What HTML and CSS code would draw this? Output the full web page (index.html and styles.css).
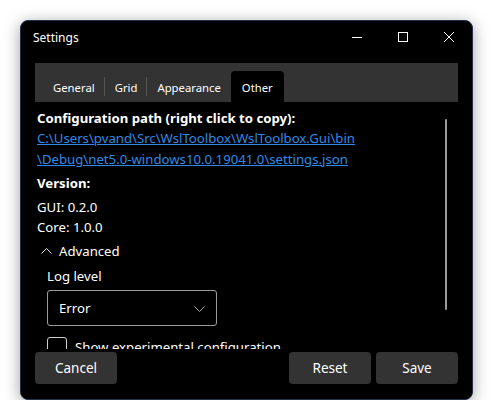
FILE: index.html
```html
<!DOCTYPE html>
<html>
<head>
<meta charset="utf-8">
<link rel="stylesheet" href="styles.css">
</head>
<body>
<div class="window">
  <div class="titlebar">
    <div class="title">Settings</div>
    <div class="caption-buttons">
      <div class="cap-btn"><svg width="10" height="10" viewBox="0 0 10 10"><path d="M0 5.5H10" stroke="#fff" stroke-width="1"/></svg></div>
      <div class="cap-btn"><svg width="10" height="10" viewBox="0 0 10 10"><rect x="0.5" y="0.5" width="9" height="9" fill="none" stroke="#fff" stroke-width="1"/></svg></div>
      <div class="cap-btn"><svg width="10" height="10" viewBox="0 0 10 10"><path d="M0 0L10 10M10 0L0 10" stroke="#fff" stroke-width="1"/></svg></div>
    </div>
  </div>
  <div class="tabstrip">
    <div class="tab sep">General</div>
    <div class="tab sep">Grid</div>
    <div class="tab">Appearance</div>
    <div class="tab active">Other</div>
  </div>
  <div class="scroller">
    <div class="content">
      <div class="heading">Configuration path (right click to copy):</div>
      <a class="link">C:\Users\pvand\Src\WslToolbox\WslToolbox.Gui\bin<br>\Debug\net5.0-windows10.0.19041.0\settings.json</a>
      <div class="heading version">Version:</div>
      <div class="line gui">GUI: 0.2.0</div>
      <div class="line">Core: 1.0.0</div>
      <div class="expander">
        <svg width="11" height="6" viewBox="0 0 11 6"><path d="M0.5 5.5L5.5 0.5L10.5 5.5" fill="none" stroke="#ddd" stroke-width="1"/></svg>
        <span>Advanced</span>
      </div>
      <div class="sub">
        <div class="label">Log level</div>
        <div class="combo">
          <span>Error</span>
          <svg width="11" height="6" viewBox="0 0 11 6"><path d="M0.5 0.5L5.5 5.5L10.5 0.5" fill="none" stroke="#aaa" stroke-width="1"/></svg>
        </div>
        <div class="check">
          <div class="box"></div>
          <span>Show experimental configuration</span>
        </div>
      </div>
    </div>
    <div class="scrollbar"></div>
  </div>
  <div class="footer">
    <div class="btn">Cancel</div>
    <div class="spacer"></div>
    <div class="btn">Reset</div>
    <div class="btn">Save</div>
  </div>
</div>
</body>
</html>
```

FILE: styles.css
```css
html, body {
  margin: 0;
  padding: 0;
  background: #fff;
}
body {
  font-family: "Noto Sans", "Open Sans", sans-serif;
  font-size: 13.2px;
  color: #fff;
}
.window {
  box-sizing: border-box;
  margin: 20px 0 0 20px;
  width: 453px;
  height: 380px;
  background: #000;
  border: 1px solid #22324a;
  border-radius: 8px;
  box-shadow: 0 3px 16px rgba(0, 0, 0, 0.38);
  display: flex;
  flex-direction: column;
  overflow: hidden;
}
.titlebar {
  height: 32px;
  display: flex;
  align-items: center;
  flex: none;
}
.title {
  padding-left: 12px;
  font-size: 12px;
  flex: 1;
  padding-top: 1px;
}
.caption-buttons {
  display: flex;
  height: 32px;
}
.cap-btn {
  width: 46px;
  height: 32px;
  display: flex;
  align-items: center;
  justify-content: center;
}
.tabstrip {
  flex: none;
  margin: 10px 14px 0 14px;
  height: 39px;
  background: #333333;
  display: flex;
  align-items: flex-end;
  padding-left: 8px;
}
.tab {
  height: 31px;
  line-height: 31px;
  padding: 0 10px;
  font-size: 11.3px;
  position: relative;
  box-sizing: border-box;
  padding-top: 1px;
}
.tab.sep::after {
  content: "";
  position: absolute;
  right: 0;
  top: 6px;
  height: 19px;
  width: 1px;
  background: #555;
}
.tab.active {
  background: #000;
  border-radius: 4px 4px 0 0;
  padding: 1px 11px 0 11px;
}
.scroller {
  flex: none;
  height: 247px;
  display: flex;
  overflow: hidden;
}
.content {
  flex: 1;
  padding: 6px 0 0 16px;
}
.heading {
  font-weight: bold;
  line-height: 20px;
}
.link {
  display: block;
  color: #2e8ae6;
  text-decoration: underline;
  line-height: 21px;
}
.version {
  margin-top: 3px;
}
.line {
  line-height: 20px;
}
.gui {
  margin-top: 4px;
}
.expander {
  margin-top: 4px;
  height: 20px;
  display: flex;
  align-items: center;
  padding-left: 4px;
}
.expander svg {
  margin-right: 7px;
  margin-top: -1px;
}
.sub {
  padding-left: 10px;
}
.label {
  margin-top: 5px;
  line-height: 20px;
}
.combo {
  margin-top: 4px;
  box-sizing: border-box;
  width: 170px;
  height: 36px;
  border: 1px solid #9a9a9a;
  border-radius: 3px;
  display: flex;
  align-items: center;
  justify-content: space-between;
  padding: 0 11px 0 11px;
}
.combo svg {
  margin-top: 1px;
}
.check {
  margin-top: 11px;
  display: flex;
  align-items: flex-start;
}
.box {
  width: 18px;
  height: 18px;
  border: 1px solid #cfcfcf;
  border-radius: 3px;
  margin-right: 8px;
}
.check span {
  line-height: 20px;
}
.scrollbar {
  flex: none;
  width: 2px;
  height: 191px;
  margin-top: 17px;
  margin-right: 25px;
  background: #9a9a9a;
  border-radius: 1px;
}
.footer {
  flex: none;
  display: flex;
  gap: 5px;
  margin: 3px 14px 0 14px;
}
.spacer {
  flex: 1;
}
.btn {
  width: 82px;
  height: 32px;
  background: #333333;
  border-radius: 4px;
  display: flex;
  align-items: center;
  justify-content: center;
  font-size: 13.5px;
}
```
